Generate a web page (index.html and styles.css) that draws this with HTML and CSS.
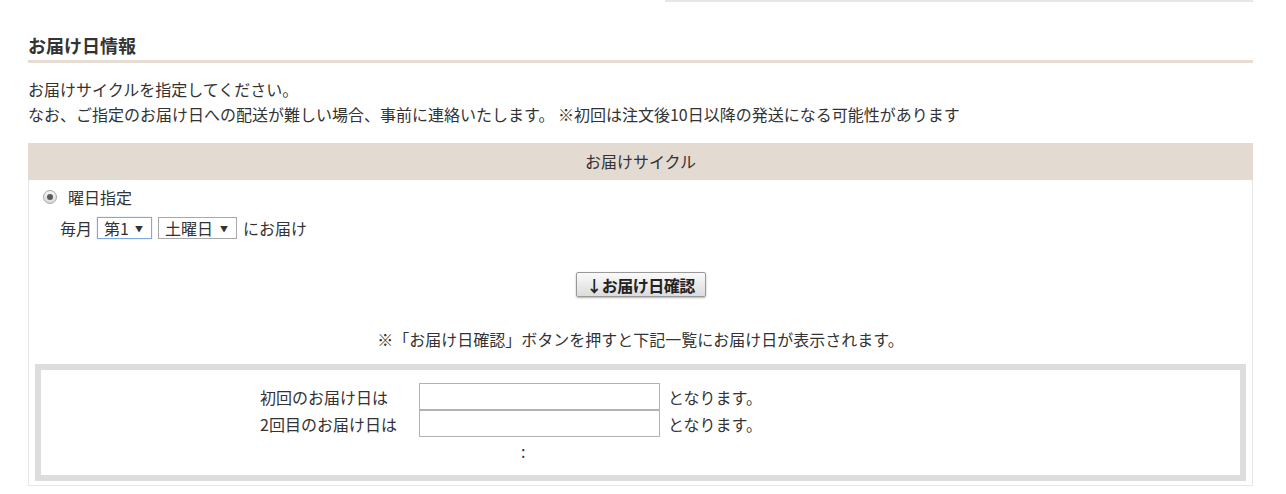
FILE: index.html
```html
<!DOCTYPE html>
<html lang="ja">
<head>
  <meta charset="UTF-8" />
  <title>お届け日情報</title>
  <link rel="stylesheet" href="styles.css">
</head>
<body>
  <div class="wrap">
    <div class="prev-box"></div>

    <h2 class="sec-title">お届け日情報</h2>
    <p class="lead">
      お届けサイクルを指定してください。<br />
      なお、ご指定のお届け日への配送が難しい場合、事前に連絡いたします。 ※初回は注文後10日以降の発送になる可能性があります
    </p>

    <div class="cycle">
      <div class="cycle-head">お届けサイクル</div>
      <div class="cycle-body">
        <div class="radio-row">
          <span class="radio"></span>
          <span>曜日指定</span>
        </div>
        <div class="week-row">
          <span>毎月</span>
          <span class="sel focus">第1<i>▼</i></span>
          <span class="sel wide">土曜日<i>▼</i></span>
          <span>にお届け</span>
        </div>

        <div class="btn-row">
          <button class="btn">↓お届け日確認</button>
        </div>
        <p class="note">※「お届け日確認」ボタンを押すと下記一覧にお届け日が表示されます。</p>

        <div class="dates">
          <div class="date-grid">
            <span>初回のお届け日は</span>
            <input type="text" class="date-input" />
            <span class="after">となります。</span>
            <span>2回目のお届け日は</span>
            <input type="text" class="date-input" />
            <span class="after">となります。</span>
            <span></span>
            <span class="dots">:</span>
            <span></span>
          </div>
        </div>
      </div>
    </div>
  </div>
</body>
</html>
```

FILE: styles.css
```css
body {
  margin: 0;
  font-family: "Noto Sans CJK JP", "Noto Sans", sans-serif;
  font-size: 16px;
  color: #333;
  background: #fff;
}
.wrap {
  width: 1225px;
  margin-left: 28px;
}
.prev-box {
  margin-left: 637px;
  border-bottom: 2px solid #e6e6e6;
}
.sec-title {
  margin: 31px 0 0;
  padding-bottom: 3px;
  font-size: 18px;
  line-height: 24px;
  font-weight: bold;
  color: #333;
  border-bottom: 3px solid #e5dcd4;
}
.lead {
  margin: 14px 0 16px;
  line-height: 25px;
}
.cycle {
  border: 1px solid #e6e6e6;
  border-top: none;
}
.cycle-head {
  height: 37px;
  line-height: 37px;
  margin: 0 -1px;
  text-align: center;
  background: #e3dad2;
}
.cycle-body { padding: 5px 6px 4px; }
.radio-row {
  display: flex;
  align-items: center;
  height: 24px;
  padding-left: 8px;
  gap: 11px;
}
.radio {
  width: 12px;
  height: 12px;
  border: 1px solid #a8a8a8;
  border-radius: 50%;
  background: linear-gradient(#f4f4f4, #dadada);
  display: flex;
  align-items: center;
  justify-content: center;
}
.radio::after {
  content: "";
  width: 6px;
  height: 6px;
  border-radius: 50%;
  background: #5a5a5a;
}
.week-row {
  display: flex;
  align-items: center;
  height: 28px;
  margin-top: 5px;
  padding-left: 25px;
  gap: 6px;
}
.sel {
  display: flex;
  align-items: center;
  justify-content: space-between;
  box-sizing: border-box;
  height: 22px;
  padding: 0 8px 0 6px;
  border: 1px solid #a9a9a9;
  background: #fff;
  width: 55px;
}
.sel i {
  font-style: normal;
  font-size: 8px;
}
.sel.focus {
  border-color: #7ea8e0;
  box-shadow: 0 0 1px #9dbfee;
  margin-left: -1px;
}
.sel.wide { width: 79px; }
.btn-row {
  margin-top: 30px;
  text-align: center;
}
.btn {
  width: 130px;
  height: 25px;
  padding: 0;
  font-family: inherit;
  font-size: 16px;
  line-height: 22px;
  font-weight: bold;
  letter-spacing: -0.5px;
  color: #222;
  border: 1px solid #999;
  border-radius: 2px;
  background: linear-gradient(#fafafa, #dcdcdc);
  box-shadow: 0 1px 2px rgba(0, 0, 0, 0.3);
}
.note {
  margin: 30px 0 12px;
  line-height: 25px;
  text-align: center;
}
.dates {
  border: 6px solid #dddddd;
  padding: 13px 0 10px 219px;
}
.date-grid {
  display: grid;
  grid-template-columns: 159px 241px auto;
  align-items: center;
}
.date-input {
  box-sizing: border-box;
  width: 241px;
  height: 27px;
  margin: 0;
  border: 1px solid #b2b2b2;
}
.after { padding-left: 8px; }
.dots {
  height: 28px;
  line-height: 28px;
  padding-left: 102px;
}
```
